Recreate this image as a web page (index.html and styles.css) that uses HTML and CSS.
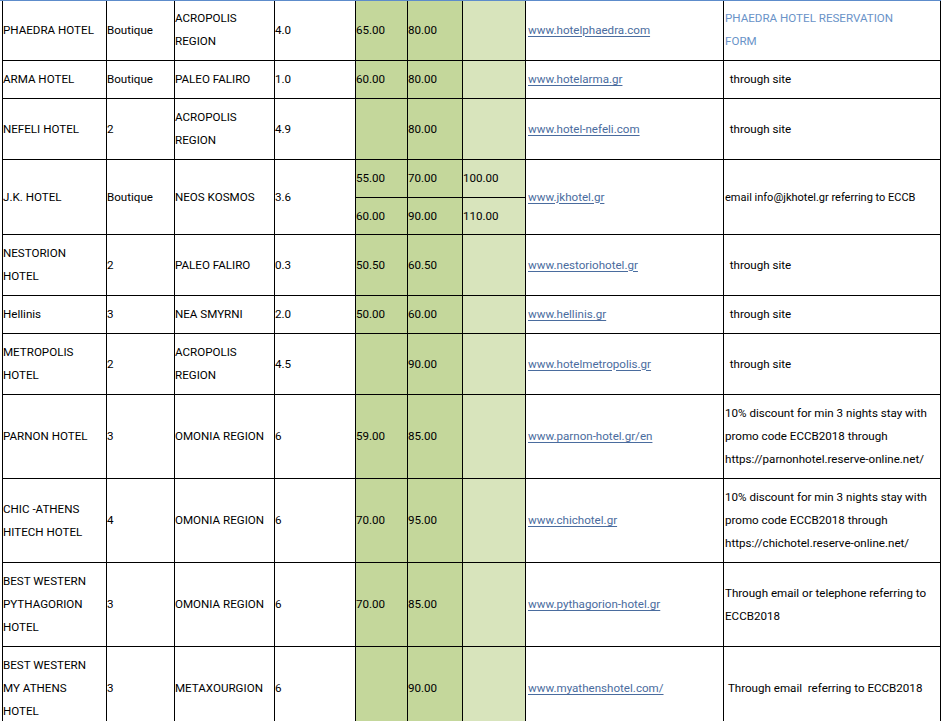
FILE: index.html
```html
<!DOCTYPE html>
<html>
<head>
<meta charset="utf-8">
<title>Hotels</title>
<link rel="stylesheet" href="styles.css">
</head>
<body>
<div class="sheet">
  <div class="topline"></div>
  <div class="grid">
    <div class="c r1">PHAEDRA HOTEL</div>
    <div class="c r1">Boutique</div>
    <div class="c r1">ACROPOLIS<br>REGION</div>
    <div class="c r1">4.0</div>
    <div class="c r1 g1">65.00</div>
    <div class="c r1 g1">80.00</div>
    <div class="c r1 g2"></div>
    <div class="c r1 lc"><a class="lnk">www.hotelphaedra.com</a></div>
    <div class="c r1 t9 hdr">PHAEDRA HOTEL RESERVATION<br>FORM</div>

    <div class="c">ARMA HOTEL</div>
    <div class="c">Boutique</div>
    <div class="c">PALEO FALIRO</div>
    <div class="c">1.0</div>
    <div class="c g1">60.00</div>
    <div class="c g1">80.00</div>
    <div class="c g2"></div>
    <div class="c lc"><a class="lnk">www.hotelarma.gr</a></div>
    <div class="c">&nbsp;&nbsp;through site</div>

    <div class="c">NEFELI HOTEL</div>
    <div class="c">2</div>
    <div class="c">ACROPOLIS<br>REGION</div>
    <div class="c">4.9</div>
    <div class="c g1"></div>
    <div class="c g1">80.00</div>
    <div class="c g2"></div>
    <div class="c lc"><a class="lnk">www.hotel-nefeli.com</a></div>
    <div class="c">&nbsp;&nbsp;through site</div>

    <div class="c span2">J.K. HOTEL</div>
    <div class="c span2">Boutique</div>
    <div class="c span2">NEOS KOSMOS</div>
    <div class="c span2">3.6</div>
    <div class="c g1">55.00</div>
    <div class="c g1">70.00</div>
    <div class="c g2">100.00</div>
    <div class="c span2 lc"><a class="lnk">www.jkhotel.gr</a></div>
    <div class="c span2 t9 small">email info@jkhotel.gr referring to ECCB</div>
    <div class="c g1 sub2">60.00</div>
    <div class="c g1 sub2">90.00</div>
    <div class="c g2 sub2">110.00</div>

    <div class="c">NESTORION<br>HOTEL</div>
    <div class="c">2</div>
    <div class="c">PALEO FALIRO</div>
    <div class="c">0.3</div>
    <div class="c g1">50.50</div>
    <div class="c g1">60.50</div>
    <div class="c g2"></div>
    <div class="c lc"><a class="lnk">www.nestoriohotel.gr</a></div>
    <div class="c">&nbsp;&nbsp;through site</div>

    <div class="c">Hellinis</div>
    <div class="c">3</div>
    <div class="c">NEA SMYRNI</div>
    <div class="c">2.0</div>
    <div class="c g1">50.00</div>
    <div class="c g1">60.00</div>
    <div class="c g2"></div>
    <div class="c lc"><a class="lnk">www.hellinis.gr</a></div>
    <div class="c">&nbsp;&nbsp;through site</div>

    <div class="c">METROPOLIS<br>HOTEL</div>
    <div class="c">2</div>
    <div class="c">ACROPOLIS<br>REGION</div>
    <div class="c">4.5</div>
    <div class="c g1"></div>
    <div class="c g1">90.00</div>
    <div class="c g2"></div>
    <div class="c lc"><a class="lnk">www.hotelmetropolis.gr</a></div>
    <div class="c">&nbsp;&nbsp;through site</div>

    <div class="c">PARNON HOTEL</div>
    <div class="c">3</div>
    <div class="c">OMONIA REGION</div>
    <div class="c">6</div>
    <div class="c g1">59.00</div>
    <div class="c g1">85.00</div>
    <div class="c g2"></div>
    <div class="c lc"><a class="lnk">www.parnon-hotel.gr/en</a></div>
    <div class="c t9">10% discount for min 3 nights stay with<br>promo code ECCB2018 through<br>https://parnonhotel.reserve-online.net/</div>

    <div class="c">CHIC -ATHENS<br>HITECH HOTEL</div>
    <div class="c">4</div>
    <div class="c">OMONIA REGION</div>
    <div class="c">6</div>
    <div class="c g1">70.00</div>
    <div class="c g1">95.00</div>
    <div class="c g2"></div>
    <div class="c lc"><a class="lnk">www.chichotel.gr</a></div>
    <div class="c t9">10% discount for min 3 nights stay with<br>promo code ECCB2018 through<br>https://chichotel.reserve-online.net/</div>

    <div class="c">BEST WESTERN<br>PYTHAGORION<br>HOTEL</div>
    <div class="c">3</div>
    <div class="c">OMONIA REGION</div>
    <div class="c">6</div>
    <div class="c g1">70.00</div>
    <div class="c g1">85.00</div>
    <div class="c g2"></div>
    <div class="c lc"><a class="lnk">www.pythagorion-hotel.gr</a></div>
    <div class="c t9">Through email or telephone referring to<br>ECCB2018</div>

    <div class="c">BEST WESTERN<br>MY ATHENS<br>HOTEL</div>
    <div class="c">3</div>
    <div class="c">METAXOURGION</div>
    <div class="c">6</div>
    <div class="c g1"></div>
    <div class="c g1">90.00</div>
    <div class="c g2"></div>
    <div class="c lc"><a class="lnk">www.myathenshotel.com/</a></div>
    <div class="c t9">&nbsp;Through email &nbsp;referring to ECCB2018</div>
  </div>
</div>
</body>
</html>
```
FILE: styles.css
```css
html, body {
  margin: 0;
  padding: 0;
  overflow: hidden;
  background: #ffffff;
}

.sheet {
  font-family: Roboto, "Liberation Sans", Arial, sans-serif;
  font-size: 11.6px;
  line-height: 23px;
  color: #000000;
}

.topline {
  height: 1px;
  background: #5d8ccb;
}

.grid {
  display: grid;
  grid-template-columns: 103px 67px 99px 80px 51px 54px 62px 197px 216px;
  gap: 1px;
  background: #000000;
  padding: 0 1px 1px 1px;
  margin-left: 2px;
  width: 937px;
}

.c {
  background: #ffffff;
  display: flex;
  flex-direction: column;
  justify-content: center;
  align-items: flex-start;
  padding: 7px 0;
  white-space: nowrap;
}

.r1 {
  padding-top: 6px;
}

.span2 {
  grid-row: span 2;
}

.sub2 {
  padding-bottom: 6px;
}

.lc {
  padding-left: 2px;
}

.t9 {
  padding-left: 1px;
}

.g1 {
  background: #c4d79b;
}

.g2 {
  background: #d8e4bc;
}

.lnk {
  color: #4a6c9e;
  text-decoration: underline;
  text-underline-offset: 2px;
}

.hdr {
  color: #6a93c8;
}

.small {
  font-size: 11px;
}
```
